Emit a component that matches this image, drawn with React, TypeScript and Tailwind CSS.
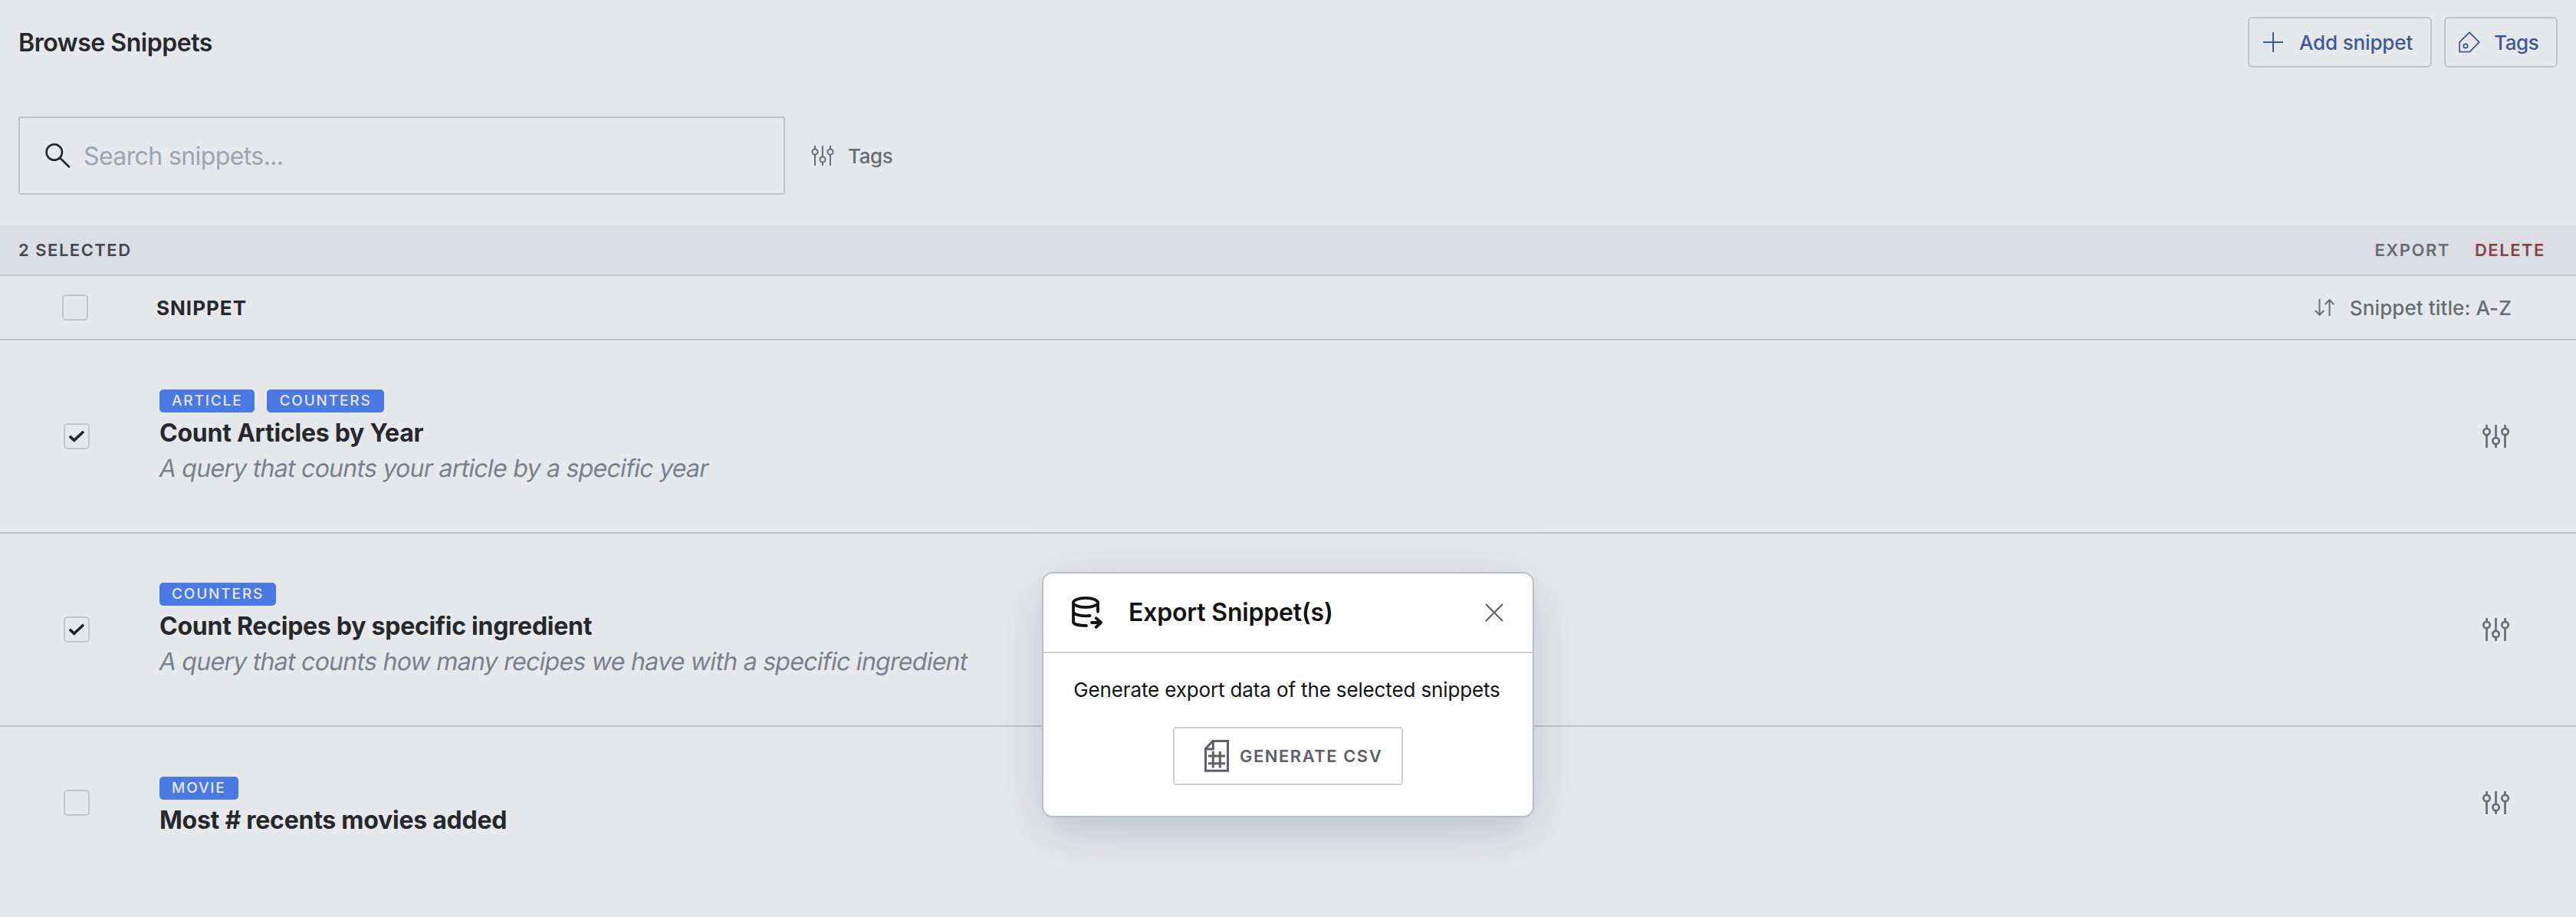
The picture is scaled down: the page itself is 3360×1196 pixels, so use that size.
import type { ReactNode } from "react";

const snippets = [
  {
    tags: ["ARTICLE", "COUNTERS"],
    title: "Count Articles by Year",
    description: "A query that counts your article by a specific year",
    checked: true,
  },
  {
    tags: ["COUNTERS"],
    title: "Count Recipes by specific ingredient",
    description: "A query that counts how many recipes we have with a specific ingredient",
    checked: true,
  },
  {
    tags: ["MOVIE"],
    title: "Most # recents movies added",
    description: "",
    checked: false,
  },
];

function Text({ children, className }: { children: ReactNode; className: string }) {
  return <span className={`block whitespace-nowrap ${className}`}>{children}</span>;
}

function SearchIcon() {
  return (
    <svg className="h-8 w-[33px] shrink-0" viewBox="0 0 33 32" fill="none" stroke="#26282b" strokeWidth="2.6" strokeLinecap="round">
      <circle cx="11.8" cy="11.5" r="10.2" />
      <path d="M19 18.8 31 30.5" />
    </svg>
  );
}

function SlidersIcon({ className }: { className: string }) {
  return (
    <svg className={`shrink-0 ${className}`} viewBox="0 0 35 30" fill="none" stroke="#686c75" strokeWidth="2.7">
      <path d="M5.5 0v4.5M5.5 13.5V30M17.5 0v16.5M17.5 25.5V30M29.5 0v4.5M29.5 13.5V30" />
      <circle cx="5.5" cy="9" r="4.2" />
      <circle cx="17.5" cy="21" r="4.2" />
      <circle cx="29.5" cy="9" r="4.2" />
    </svg>
  );
}

function SmallSlidersIcon() {
  return (
    <svg className="h-[26px] w-[30px] shrink-0" viewBox="0 0 30 26" fill="none" stroke="#686c75" strokeWidth="2">
      <path d="M5 0v4.5M5 11.5V26M15 0v14.5M15 21.5V26M25 0v4.5M25 11.5V26" />
      <circle cx="5" cy="8" r="3.6" />
      <circle cx="15" cy="18" r="3.6" />
      <circle cx="25" cy="8" r="3.6" />
    </svg>
  );
}

function PlusIcon() {
  return (
    <svg className="h-[26px] w-[26px] shrink-0" viewBox="0 0 26 26" stroke="#3d5a98" strokeWidth="2">
      <path d="M13 0v26M0 13h26" />
    </svg>
  );
}

function TagIcon() {
  return (
    <svg className="h-7 w-7 shrink-0" viewBox="0 0 28 28" fill="none" stroke="#3d5a98" strokeWidth="1.8">
      <path d="M1.2 13.8 14 1.3 26.8 14 14.3 26.6H1.2z" />
      <circle cx="9" cy="19" r="2.7" />
    </svg>
  );
}

function SortIcon() {
  return (
    <svg className="h-[22px] w-[26px] shrink-0" viewBox="0 0 26 22" fill="none" stroke="#686c75" strokeWidth="2">
      <path d="M6.5 0v21M.7 15 6.5 20.8 12.3 15M19.5 22V1M13.7 7l5.8-5.8L25.3 7" />
    </svg>
  );
}

function DatabaseExportIcon() {
  return (
    <svg className="h-[42px] w-10 shrink-0" viewBox="0 0 40 42" fill="none" stroke="#111214" strokeWidth="3.8" strokeLinecap="round" strokeLinejoin="round">
      <ellipse cx="18" cy="8" rx="16" ry="6.1" />
      <path d="M34 8v11.800M2 8v25c0 3 7 5 17 5M2 19.500c0 3.500 7 5.800 16 5.800 2.200 0 4-.1 5.500-.3M26 34H38M31.800 28.200 38 34l-6.200 5.900" />
    </svg>
  );
}

function CloseIcon() {
  return (
    <svg className="h-6 w-6 shrink-0" viewBox="0 0 24 24" stroke="#5c5f68" strokeWidth="2">
      <path d="M1 1l22 22M23 1 1 23" />
    </svg>
  );
}

function SheetIcon() {
  return (
    <svg className="h-[42px] w-8 shrink-0" viewBox="0 0 32 42" fill="none" stroke="#5c5f68" strokeWidth="3">
      <path d="M1.500 11.300 11 1.500H30.500V40.300H1.500zM1.500 12H11.300V1.500M5 21H27M5 30.700H27M11.300 15V36.500M20.300 15V36.500" />
    </svg>
  );
}

function Checkbox({ checked }: { checked: boolean }) {
  return (
    <span className="flex h-[34px] w-[34px] shrink-0 items-center justify-center rounded-[5px] border-2 border-[#c3c6ce]">
      {checked && (
        <svg className="h-[18px] w-[24px]" viewBox="0 0 24 18" fill="none" stroke="#222427" strokeWidth="3.6">
          <path d="M2.800 8.800 8.800 14.300 21 2.800" />
        </svg>
      )}
    </span>
  );
}

export default function App() {
  return (
    <main className="relative h-[1196px] w-[3360px] overflow-hidden bg-[#e7e8ec] font-['Inter',sans-serif] text-[#26282b]">
      <header className="flex h-[152px] items-start justify-between pt-[22px] pr-6 pl-6">
        <Text className="text-[32px] leading-[68px] font-semibold tracking-[-0.45px]">Browse Snippets</Text>
        <div className="flex gap-4 text-[26px] font-medium text-[#3d5a98]">
          <button className="flex h-[66px] w-[240px] items-center rounded-md border-2 border-[#bfc3cb] pl-[18px]">
            <PlusIcon />
            <Text className="ml-[21px] tracking-[-0.15px]">Add snippet</Text>
          </button>
          <button className="flex h-[66px] w-[148px] items-center rounded-md border-2 border-[#bfc3cb] pl-[17px]">
            <TagIcon />
            <Text className="ml-[18px] tracking-[-0.4px]">Tags</Text>
          </button>
        </div>
      </header>

      <section className="flex h-[142px] items-start pl-6">
        <div className="flex h-[102px] w-[1000px] items-center rounded-[3px] border-2 border-[#bfc3cb] pl-[33px]">
          <SearchIcon />
          <Text className="ml-[17px] pt-[2px] text-[32px] tracking-[-0.6px] text-[#9fa4b1]">Search snippets...</Text>
        </div>
        <div className="flex h-[102px] items-center pl-[34px]">
          <SmallSlidersIcon />
          <Text className="ml-[18px] text-[26px] font-medium tracking-[-0.4px] text-[#686c75]">Tags</Text>
        </div>
      </section>

      <div className="flex h-[66px] items-center justify-between border-b-2 border-[#bfc3cb] bg-[#dddee4] pr-10 pl-6 text-[22px] font-semibold">
        <Text className="tracking-[1.5px] text-[#45484e]">2 SELECTED</Text>
        <div className="flex gap-8">
          <Text className="tracking-[1.55px] text-[#686c75]">EXPORT</Text>
          <Text className="tracking-[1.55px] text-[#864346]">DELETE</Text>
        </div>
      </div>

      <div className="flex h-[84px] items-center border-b-2 border-[#bfc3cb] pr-[84px] pl-[81px]">
        <Checkbox checked={false} />
        <Text className="ml-[89px] text-[26px] font-bold tracking-[1px]">SNIPPET</Text>
        <div className="ml-auto flex items-center text-[26px] font-medium text-[#686c75]">
          <SortIcon />
          <Text className="ml-[20px] tracking-[0.1px]">Snippet title: A-Z</Text>
        </div>
      </div>

      {snippets.map((s) => (
        <article
          key={s.title}
          className={`flex items-center pr-[87px] pl-[83px] ${s.description ? "h-[252px] border-b-2 border-[#bfc3cb]" : "h-[198px]"}`}
        >
          <Checkbox checked={s.checked} />
          <div className={`ml-[91px] ${s.description ? "pt-1" : "pt-3"}`}>
            <div className="flex gap-4">
              {s.tags.map((t) => (
                <Text key={t} className="h-[30px] rounded-[5px] bg-[#4b79e3] px-4 text-[19px] leading-[30px] font-medium tracking-[1.85px] text-[#e7e8ec]">
                  {t}
                </Text>
              ))}
            </div>
            <Text className="mt-[4px] text-[32px] leading-[46px] font-bold tracking-[-0.25px]">{s.title}</Text>
            {s.description && (
              <Text className="-ml-[2px] w-fit origin-[0_35px] -skew-x-[10deg] text-[32px] leading-[46px] tracking-[-0.71px] text-[#7b818c]">{s.description}</Text>
            )}
          </div>
          <SlidersIcon className="ml-auto h-[30px] w-[35px]" />
        </article>
      ))}

      <div
        role="dialog"
        className="absolute top-[746px] left-[1359px] h-[320px] w-[642px] rounded-[14px] border-2 border-[#b9bdc7] bg-white text-[#111214] shadow-[0_16px_90px_rgba(80,85,100,0.14),0_24px_50px_-12px_rgba(80,95,130,0.18)]"
      >
        <div className="flex h-[104px] items-center border-b-2 border-[#cdd0d4] pr-[38px] pl-[37px]">
          <DatabaseExportIcon />
          <Text className="ml-[34px] text-[32px] font-semibold tracking-[-0.2px]">Export Snippet(s)</Text>
          <span className="ml-auto">
            <CloseIcon />
          </span>
        </div>
        <div className="flex flex-col items-center pt-[28px]">
          <Text className="mr-[3px] text-[26px] leading-[40px] tracking-[-0.14px]">Generate export data of the selected snippets</Text>
          <button className="mt-[28px] flex h-[76px] w-[300px] items-center rounded-[5px] border-2 border-[#cbced5] pl-[39px]">
            <SheetIcon />
            <Text className="ml-[14px] text-[22px] font-semibold tracking-[1.5px] text-[#5c5f68]">GENERATE CSV</Text>
          </button>
        </div>
      </div>
    </main>
  );
}
